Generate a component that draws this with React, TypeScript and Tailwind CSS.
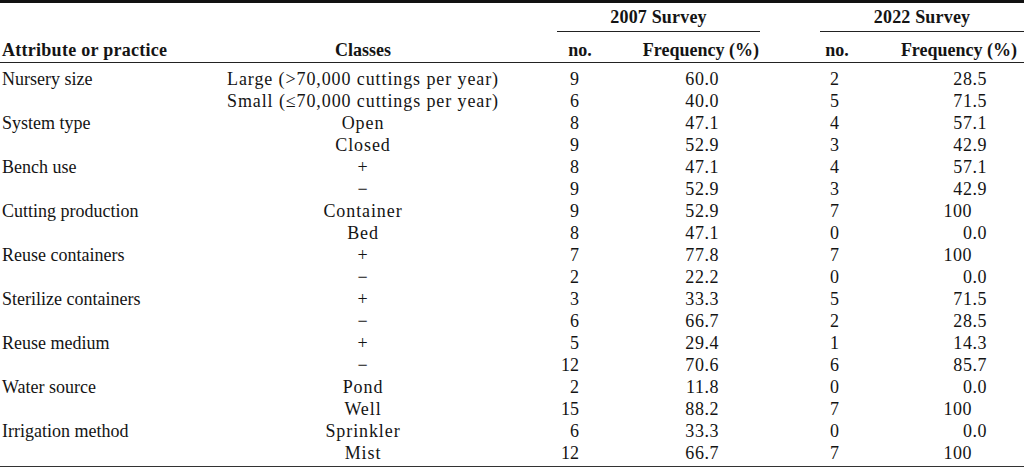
const rows: [string, string, string, string, string, string][] = [
  ["Nursery size", "Large (>70,000 cuttings per year)", "9", "60.0", "2", "28.5"],
  ["", "Small (≤70,000 cuttings per year)", "6", "40.0", "5", "71.5"],
  ["System type", "Open", "8", "47.1", "4", "57.1"],
  ["", "Closed", "9", "52.9", "3", "42.9"],
  ["Bench use", "+", "8", "47.1", "4", "57.1"],
  ["", "−", "9", "52.9", "3", "42.9"],
  ["Cutting production", "Container", "9", "52.9", "7", "100"],
  ["", "Bed", "8", "47.1", "0", "0.0"],
  ["Reuse containers", "+", "7", "77.8", "7", "100"],
  ["", "−", "2", "22.2", "0", "0.0"],
  ["Sterilize containers", "+", "3", "33.3", "5", "71.5"],
  ["", "−", "6", "66.7", "2", "28.5"],
  ["Reuse medium", "+", "5", "29.4", "1", "14.3"],
  ["", "−", "12", "70.6", "6", "85.7"],
  ["Water source", "Pond", "2", "11.8", "0", "0.0"],
  ["", "Well", "15", "88.2", "7", "100"],
  ["Irrigation method", "Sprinkler", "6", "33.3", "0", "0.0"],
  ["", "Mist", "12", "66.7", "7", "100"],
];

export default function App() {
  return (
    <div className="w-[1024px] h-[467px] bg-white text-[#141414] font-['Liberation_Serif',serif] text-[18px] leading-[22px] overflow-hidden">
      <table className="w-[1024px] table-fixed border-collapse border-t-[3px] border-b-2 border-t-[#111] border-b-[#333]">
        <colgroup>
          <col className="w-[190px]" />
          <col className="w-[346px]" />
          <col className="w-[21px]" />
          <col className="w-[46px]" />
          <col className="w-[157px]" />
          <col className="w-[60px]" />
          <col className="w-[30px]" />
          <col className="w-[174px]" />
        </colgroup>
        <thead className="font-bold">
          <tr>
            <th rowSpan={2} className="text-left align-bottom pl-[2px] pb-px whitespace-nowrap tracking-[0.015em] border-b-[1.5px] border-[#222]">
              Attribute or practice
            </th>
            <th rowSpan={2} className="text-center align-bottom pb-px border-b-[1.5px] border-[#222]">
              Classes
            </th>
            <th rowSpan={2} className="border-b-[1.5px] border-[#222]" />
            <th colSpan={2} className="text-center pt-[3px] pb-[3px] tracking-[0.01em] border-b border-[#222]">
              2007 Survey
            </th>
            <th rowSpan={2} className="border-b-[1.5px] border-[#222]" />
            <th colSpan={2} className="text-center pt-[3px] pb-[3px] tracking-[0.01em] border-b border-[#222]">
              2022 Survey
            </th>
          </tr>
          <tr>
            <th className="text-center pt-[7px] pb-px border-b-[1.5px] border-[#222]">no.</th>
            <th className="text-right pr-px pt-[7px] pb-px whitespace-nowrap border-b-[1.5px] border-[#222]">
              Frequency (%)
            </th>
            <th className="text-center pl-[4px] pt-[7px] pb-px border-b-[1.5px] border-[#222]">no.</th>
            <th className="text-right pr-[7px] pt-[7px] pb-px whitespace-nowrap border-b-[1.5px] border-[#222]">
              Frequency (%)
            </th>
          </tr>
        </thead>
        <tbody>
          {rows.map((r, i) => {
            const pad = i === 0 ? "pt-[5px]" : i === rows.length - 1 ? "pb-[2px]" : "";
            return (
              <tr key={i}>
                <td className={`pl-[2px] whitespace-nowrap ${pad}`}>{r[0]}</td>
                <td className={`text-center whitespace-nowrap tracking-[0.05em] ${pad}`}>{r[1]}</td>
                <td className={pad} />
                <td className={`text-right pr-[24px] ${pad}`}>{r[2]}</td>
                <td className={`text-right pr-[41px] tracking-[0.03em] ${pad}`}>{r[3]}</td>
                <td className={pad} />
                <td className={`text-right pr-[11px] ${pad}`}>{r[4]}</td>
                <td className={`text-right tracking-[0.03em] ${r[5] === "100" ? "pr-[52px]" : "pr-[37px]"} ${pad}`}>
                  {r[5]}
                </td>
              </tr>
            );
          })}
        </tbody>
      </table>
    </div>
  );
}
